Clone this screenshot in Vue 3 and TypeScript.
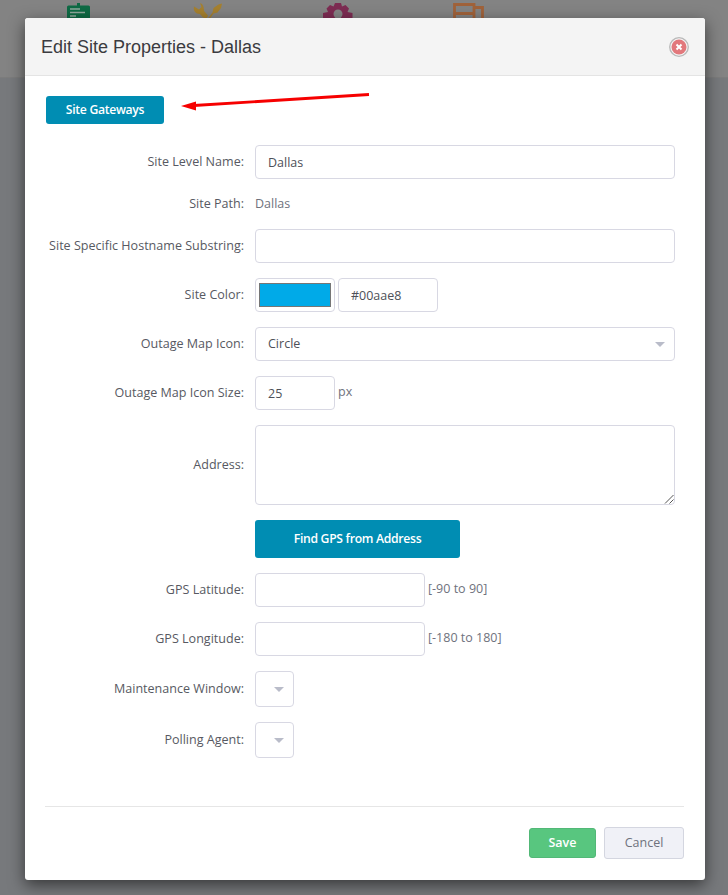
<script setup lang="ts">
const title = 'Edit Site Properties - Dallas'
</script>

<template>
  <div class="page">
    <header class="topbar">
      <svg class="nav-icon" style="left:67px" width="23" height="20" viewBox="0 0 23 20">
        <path d="M0 7a1.500 1.500 0 0 1 1.500-1.500H7V5.500L10 5.500 10 3h3v2.500h3V5.500h5.500A1.500 1.500 0 0 1 23 7v13H0z" fill="#0e6a44" />
        <path d="M3 9h10M3 12.500h15M3 16h6" stroke="#8fa89c" stroke-width="1.500" />
      </svg>
      <svg class="nav-icon" style="left:193px" width="30" height="20" viewBox="0 0 30 20">
        <path d="M1 6.500c-1 4 1.500 7.500 6 7.500l3 3.500 3.500 1 1.500-3-4-4.500C11 7 10 4 7 3l1.500 4-2.500 2.500z" fill="#a5802f" />
        <path d="M14 20l5.500-7.500 1-4.500 5-3.500 3.500-1-1 4.500-3.500 4.500-4 1L16 20z" fill="#a5802f" />
      </svg>
      <svg class="nav-icon" style="left:323px" width="30" height="20" viewBox="0 0 30 20">
        <path d="M12 3h6l1 3.500 3.500-1.500 3.500 3.500-1.500 3.500 5 1v6H0v-6l5-1L3.500 8.500 7 5l3.500 1.500z" fill="#7d2c52" />
        <circle cx="15" cy="14" r="4.500" fill="#848484" />
      </svg>
      <svg class="nav-icon" style="left:453px" width="31" height="20" viewBox="0 0 31 20" fill="none" stroke="#a0623a" stroke-width="2.800">
        <path d="M1.500 20V4.500h19.500V20M1.500 13.500h19.500M21 7.500h8.500V20" />
      </svg>
    </header>

    <section class="modal">
      <div class="modal-head">
        <h1>{{ title }}</h1>
        <button class="close" aria-label="Close">
          <svg width="20" height="20" viewBox="0 0 20 20">
            <circle cx="10" cy="10" r="9.300" fill="#f4f4f4" stroke="#b9b9b9" stroke-width="1.300" />
            <circle cx="10" cy="10" r="7.500" fill="#e2787c" />
            <path d="M7.500 7.500l5 5M12.500 7.500l-5 5" stroke="#fff" stroke-width="2" />
          </svg>
        </button>
      </div>

      <div class="modal-body">
        <button class="btn primary gateways">Site Gateways</button>

        <div class="form">
          <div class="row">
            <label>Site Level Name:</label>
            <div class="input wide">Dallas</div>
          </div>
          <div class="row path">
            <label>Site Path:</label>
            <span class="muted">Dallas</span>
          </div>
          <div class="row">
            <label>Site Specific Hostname Substring:</label>
            <div class="input wide"></div>
          </div>
          <div class="row">
            <label>Site Color:</label>
            <div class="swatch-box"><span class="swatch"></span></div>
            <div class="input hex">#00aae8</div>
          </div>
          <div class="row">
            <label>Outage Map Icon:</label>
            <div class="input wide select">Circle<i class="caret"></i></div>
          </div>
          <div class="row">
            <label>Outage Map Icon Size:</label>
            <div class="input small">25</div>
            <span class="muted unit">px</span>
          </div>
          <div class="row">
            <label>Address:</label>
            <div class="input wide area">
              <svg class="grip" width="10" height="10" viewBox="0 0 10 10">
                <path d="M1 9.500L9.500 1M5.500 9.500L9.500 5.500" stroke="#555" stroke-width="1" />
              </svg>
            </div>
          </div>
          <div class="row">
            <label></label>
            <button class="btn primary find">Find GPS from Address</button>
          </div>
          <div class="row">
            <label>GPS Latitude:</label>
            <div class="input gps"></div>
            <span class="muted range">[-90 to 90]</span>
          </div>
          <div class="row">
            <label>GPS Longitude:</label>
            <div class="input gps"></div>
            <span class="muted range">[-180 to 180]</span>
          </div>
          <div class="row">
            <label>Maintenance Window:</label>
            <div class="input mini select"><i class="caret"></i></div>
          </div>
          <div class="row">
            <label>Polling Agent:</label>
            <div class="input mini select"><i class="caret"></i></div>
          </div>
        </div>
      </div>

      <div class="modal-foot">
        <button class="btn save">Save</button>
        <button class="btn cancel">Cancel</button>
      </div>
    </section>

    <svg class="arrow" width="200" height="24" viewBox="0 0 200 24">
      <path d="M189 1.500L14 12.500" stroke="#f60000" stroke-width="2.800" fill="none" />
      <path d="M1 13L16 8.500 16 17.500z" fill="#f60000" />
    </svg>
  </div>
</template>

<style>
html, body { margin: 0; padding: 0; }
</style>

<style scoped>
* { box-sizing: border-box; }
.page {
  position: relative;
  width: 728px;
  height: 895px;
  overflow: hidden;
  background: #77797c;
  font-family: "Open Sans", "Noto Sans", sans-serif;
  font-size: 12.500px;
  color: #575962;
}
.topbar {
  position: relative;
  height: 78px;
  background: #838383;
  border-bottom: 1px solid #7c7c7c;
}
.nav-icon { position: absolute; top: 0; }
.modal {
  position: absolute;
  left: 25px;
  top: 18px;
  width: 680px;
  height: 862px;
  background: #fff;
  border-radius: 3px;
  box-shadow: 0 5px 16px rgba(0, 0, 0, 0.55);
  display: flex;
  flex-direction: column;
}
.modal-head {
  height: 58px;
  flex: none;
  background: #f4f4f4;
  border-bottom: 1px solid #e4e4e4;
  border-radius: 3px 3px 0 0;
  display: flex;
  align-items: center;
  justify-content: space-between;
  padding: 0 16px;
}
h1 {
  margin: 2px 0 0;
  font-family: "Liberation Sans", Arial, sans-serif;
  font-size: 18px;
  font-weight: 400;
  color: #3b3b40;
}
.close {
  padding: 0;
  border: 0;
  background: none;
  display: flex;
  margin-right: 0;
  margin-top: 0;
}
.modal-body {
  flex: 1;
  padding: 20px 20px 0 21px;
  display: flex;
  flex-direction: column;
  align-items: flex-start;
}
.btn {
  font-family: inherit;
  font-size: 12.500px;
  border-radius: 3px;
  padding: 0;
  border: 1px solid transparent;
}
.primary {
  background: #008db3;
  color: #fff;
  font-weight: 600;
  font-size: 12.200px;
  letter-spacing: -0.3px;
  padding-bottom: 2px;
}
.gateways { width: 118px; height: 28px; flex: none; }
.form {
  width: 100%;
  margin-top: 21px;
  display: flex;
  flex-direction: column;
  gap: 15px;
}
.row {
  display: flex;
  align-items: center;
}
.row.path { height: 20px; }
.row label {
  width: 198px;
  flex: none;
  text-align: right;
  margin-right: 11px;
  padding-bottom: 2px;
  white-space: nowrap;
  color: #575962;
  font-size: 12.550px;
}
.input {
  height: 34px;
  background: #fff;
  border: 1px solid #d8d8e3;
  border-radius: 4px;
  padding: 0 12px;
  display: flex;
  align-items: center;
  position: relative;
  color: #4e5058;
}
.select { padding-bottom: 1px; }
.wide { width: 420px; }
.hex { width: 100px; margin-left: 3px; }
.small { width: 80px; }
.gps { width: 170px; }
.area { height: 80px; }
.mini { width: 39px; height: 36px; }
.muted { color: #6f727d; }
.path .muted { padding-bottom: 2px; }
.unit { margin-left: 3px; margin-top: -3px; }
.range { margin-left: 3px; margin-top: -3px; }
.swatch-box {
  width: 80px;
  height: 34px;
  border: 1px solid #d8d8e3;
  border-radius: 4px;
  padding: 4px 3px;
  display: flex;
}
.swatch {
  flex: 1;
  background: #00aae8;
  border: 1px solid #767676;
}
.caret {
  position: absolute;
  right: 9px;
  top: 50%;
  margin-top: -2px;
  width: 0;
  height: 0;
  border-left: 5px solid transparent;
  border-right: 5px solid transparent;
  border-top: 5px solid #b9bcc9;
}
.grip { position: absolute; right: 0; bottom: 0; }
.find { width: 205px; height: 38px; }
.modal-foot {
  margin: 0 21px 0 20px;
  height: 74px;
  flex: none;
  border-top: 1px solid #e6e6e6;
  display: flex;
  justify-content: flex-end;
  align-items: center;
  gap: 8px;
  padding-bottom: 1px;
}
.save {
  width: 67px;
  height: 30px;
  background: #58c67f;
  border-color: #52b877;
  color: #fff;
  font-weight: 600;
  padding-bottom: 2px;
}
.cancel {
  width: 80px;
  height: 32px;
  background: #f0f1f7;
  border-color: #d4d6e0;
  color: #6f727d;
  padding-bottom: 2px;
}
.arrow {
  position: absolute;
  left: 180px;
  top: 93px;
}
</style>
